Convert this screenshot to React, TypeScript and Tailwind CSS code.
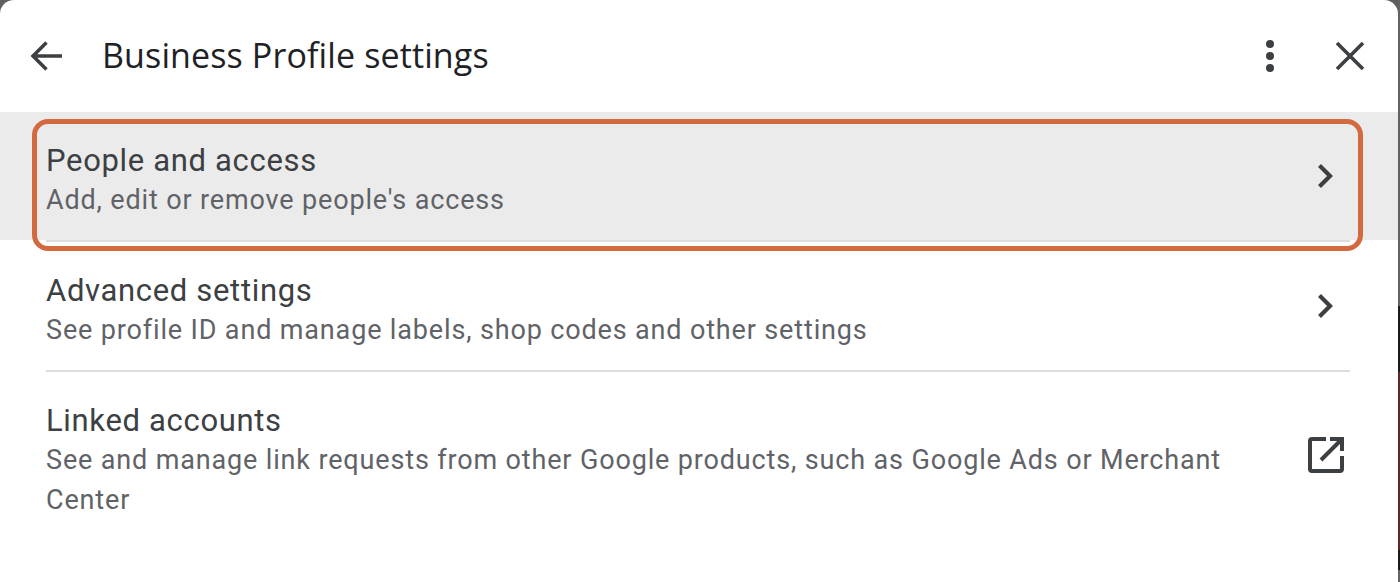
import React from "react";

function Chevron() {
  return (
    <svg width="18" height="26" viewBox="0 0 18 26" fill="none" className="shrink-0">
      <path d="M2.5 2.5 L13 13 L2.5 23.5" stroke="#3c4043" strokeWidth="4.2" />
    </svg>
  );
}

function Row({ title, sub, icon, hover, last }: { title: string; sub: string; icon: React.ReactNode; hover?: boolean; last?: boolean }) {
  return (
    <div>
      <div className={hover ? "bg-[#ebebeb] h-[128px] pl-[46px] pr-[48px] flex justify-between" : "h-[128px] pl-[46px] pr-[48px] flex justify-between"}>
        <div className="w-[1190px] pt-[29px] shrink-0">
          <div className="text-[31px] leading-[40px] text-[#3c4043] tracking-[0.67px]">{title}</div>
          <div className="-mt-px text-[27px] leading-[40px] text-[#5f6368] tracking-[0.85px]">{sub}</div>
        </div>
        <div className={last ? "w-[48px] h-[166px] flex justify-center items-center" : "w-[48px] h-[128px] flex justify-center items-center"}>{icon}</div>
      </div>
      {last ? null : <div className="h-[2px] ml-[46px] mr-[48px] bg-[#dadce0]" />}
    </div>
  );
}

export default function App() {
  return (
    <div className="w-[1400px] h-[582px] bg-[#5f5f5f] overflow-hidden flex font-['Roboto',sans-serif]">
      <div className="relative w-[1398px] h-[582px] bg-white rounded-t-[14px] overflow-hidden">
        <div className="h-[112px] flex items-center pl-[30px] pr-[33px]">
          <svg width="33" height="32" viewBox="0 0 33 32" fill="none" className="shrink-0">
            <path d="M32 16 H3.5 M16.5 2.5 L3 16 L16.5 29.5" stroke="#3c4043" strokeWidth="3.5" />
          </svg>
          <div className="ml-[39px] -mt-[2px] text-[34px] tracking-[0.12px] text-[#202124] font-['Open_Sans',sans-serif] flex-1">Business Profile settings</div>
          <svg width="12" height="32" viewBox="0 0 12 32" className="mr-[59px] shrink-0">
            <circle cx="6" cy="4" r="4" fill="#3c4043" />
            <circle cx="6" cy="16" r="4" fill="#3c4043" />
            <circle cx="6" cy="28" r="4" fill="#3c4043" />
          </svg>
          <svg width="30" height="30" viewBox="0 0 30 30" fill="none" className="shrink-0">
            <path d="M2 2 L28 28 M28 2 L2 28" stroke="#3c4043" strokeWidth="3.6" />
          </svg>
        </div>
        <Row hover title="People and access" sub="Add, edit or remove people's access" icon={<Chevron />} />
        <Row title="Advanced settings" sub="See profile ID and manage labels, shop codes and other settings" icon={<Chevron />} />
        <Row
          last
          title="Linked accounts"
          sub="See and manage link requests from other Google products, such as Google Ads or Merchant Center"
          icon={
            <svg width="36" height="36" viewBox="0 0 36 36" fill="none" className="shrink-0">
              <path d="M18 2 H4 Q2 2 2 4 V32 Q2 34 4 34 H32 Q34 34 34 32 V19" stroke="#3c4043" strokeWidth="4" />
              <path d="M22 2 H34 V14 M34 2 L13 23" stroke="#3c4043" strokeWidth="4" />
            </svg>
          }
        />
        <div className="absolute left-[32px] top-[119px] w-[1331px] h-[132px] rounded-[16px] border-[5px] border-[#d2693f]" />
      </div>
      <div className="w-[2px] flex flex-col">
        <div className="h-[306px] bg-[#636363]" />
        <div className="h-[66px] bg-[#1a1a1a]" />
        <div className="h-[178px] bg-[#5a2a2a]" />
        <div className="h-[20px] bg-[#1a1a1a]" />
        <div className="h-[12px] bg-[#636363]" />
      </div>
    </div>
  );
}
